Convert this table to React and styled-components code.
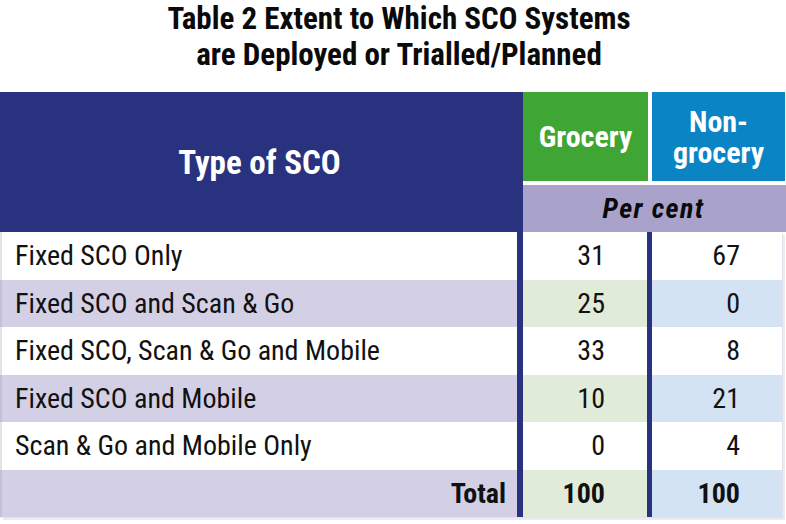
import styled, { createGlobalStyle } from "styled-components";

const NAVY = "#29327f";
const FONT = `"Roboto Condensed", "Roboto", "DejaVu Sans Condensed", sans-serif`;

const Global = createGlobalStyle`
  html, body {
    margin: 0;
    padding: 0;
    background: #fff;
  }
  body {
    font-family: ${FONT};
    font-stretch: 75%;
    color: #111;
  }
`;

const Page = styled.div`
  width: 786px;
  height: 524px;
  overflow: hidden;
`;

const Title = styled.h1`
  margin: 0;
  height: 92px;
  padding-top: 1px;
  box-sizing: border-box;
  font-size: 31px;
  line-height: 36px;
  font-weight: 700;
  text-align: center;
  color: #0a0a0a;
  padding-left: 12px;
`;

const Head = styled.div`
  display: grid;
  grid-template-columns: 523px 1fr;
  height: 140px;
`;

const TypeCell = styled.div`
  background: ${NAVY};
  color: #fff;
  font-weight: 700;
  font-size: 33px;
  display: flex;
  align-items: center;
  justify-content: center;
  padding-right: 4px;
`;

const HeadRight = styled.div`
  display: grid;
  grid-template-rows: 89px 47px;
  row-gap: 4px;
`;

const Brands = styled.div`
  display: grid;
  grid-template-columns: 125px 133px;
  column-gap: 4px;
`;

const Brand = styled.div`
  background: ${(p) => p.$bg};
  color: #fff;
  font-weight: 700;
  font-size: 30px;
  display: flex;
  flex-direction: column;
  align-items: center;
  justify-content: center;
  text-align: center;
  padding-top: ${(p) => p.$pt || 0}px;
`;

const BrandLine = styled.span`
  display: block;
  height: 31px;
  line-height: 31px;
`;

const Unit = styled.div`
  background: #a9a3cc;
  font-weight: 700;
  font-style: italic;
  font-size: 28px;
  letter-spacing: 1.4px;
  display: flex;
  align-items: center;
  justify-content: center;
  color: #0a0a0a;
  padding-right: 2px;
`;

const Body = styled.div`
  width: 782px;
  box-shadow: 1px 1px 0 #e2e1ec, 3px 3px 0 #ecebf3;
`;

const Row = styled.div`
  display: grid;
  grid-template-columns: 517px 130px 1fr;
  height: 47.5px;
  font-size: 28px;
`;

const Label = styled.div`
  background: ${(p) => (p.$alt ? "#d3d0e6" : "#fff")};
  box-shadow: inset 2px 0 0 rgba(160, 158, 185, 0.3);
  display: flex;
  align-items: center;
  justify-content: ${(p) => (p.$total ? "flex-end" : "flex-start")};
  padding: ${(p) => (p.$total ? "0 11px 0 0" : "0 0 0 15px")};
  font-weight: ${(p) => (p.$total ? 700 : 400)};
`;

const Num = styled.div`
  background: ${(p) => (p.$alt ? p.$tint : "#fff")};
  border-left: ${(p) => p.$line}px solid ${NAVY};
  display: flex;
  align-items: center;
  justify-content: flex-end;
  padding-right: 42px;
  font-weight: ${(p) => (p.$total ? 700 : 400)};
`;

const rows = [
  ["Fixed SCO Only", 31, 67],
  ["Fixed SCO and Scan & Go", 25, 0],
  ["Fixed SCO, Scan & Go and Mobile", 33, 8],
  ["Fixed SCO and Mobile", 10, 21],
  ["Scan & Go and Mobile Only", 0, 4],
];

export default function App() {
  return (
    <Page>
      <Global />
      <Title>
        Table 2 Extent to Which SCO Systems
        <br />
        are Deployed or Trialled/Planned
      </Title>
      <Head>
        <TypeCell>Type of SCO</TypeCell>
        <HeadRight>
          <Brands>
            <Brand $bg="#3fa535">Grocery</Brand>
            <Brand $bg="#0b84c3" $pt={1}>
              <BrandLine>Non-</BrandLine>
              <BrandLine>grocery</BrandLine>
            </Brand>
          </Brands>
          <Unit>Per cent</Unit>
        </HeadRight>
      </Head>
      <Body>
        {rows.map(([label, g, n], i) => (
          <Row key={label}>
            <Label $alt={i % 2 === 1}>{label}</Label>
            <Num $alt={i % 2 === 1} $tint="#e1ebd9" $line={6}>
              {g}
            </Num>
            <Num $alt={i % 2 === 1} $tint="#d3e3f3" $line={5}>
              {n}
            </Num>
          </Row>
        ))}
        <Row>
          <Label $alt $total>
            Total
          </Label>
          <Num $alt $total $tint="#e1ebd9" $line={6}>
            100
          </Num>
          <Num $alt $total $tint="#d3e3f3" $line={5}>
            100
          </Num>
        </Row>
      </Body>
    </Page>
  );
}
